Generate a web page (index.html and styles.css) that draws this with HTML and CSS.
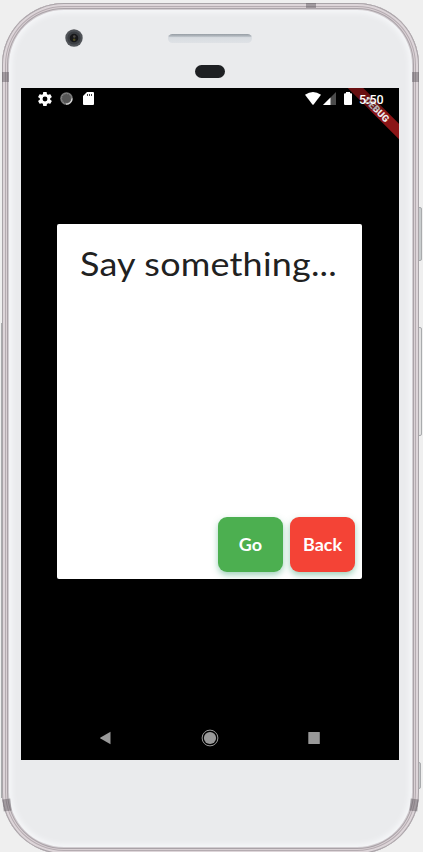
FILE: index.html
```html
<!DOCTYPE html>
<html lang="en">
<head>
<meta charset="utf-8">
<title>Say something</title>
<link rel="stylesheet" href="styles.css">
</head>
<body>
<div class="stage">
  <i class="side-key power"></i><i class="side-key volume"></i><i class="side-key lower"></i><i class="side-key left-key"></i>
  <div class="phone">
    <i class="seam top-seam"></i><i class="seam left-upper"></i><i class="seam right-upper"></i><i class="seam left-lower"></i><i class="seam right-lower"></i>
    <header class="forehead">
      <svg class="camera" width="18" height="18" viewBox="0 0 18 18"><circle cx="9" cy="9" r="8.7" fill="#505358"/><circle cx="9" cy="9" r="6.6" fill="#3b3e43"/><circle cx="9" cy="9" r="4.3" fill="#171719"/><circle cx="9.3" cy="7.5" r="1.3" fill="#4e4b47"/><circle cx="9.2" cy="10.8" r="1.3" fill="#504d22"/></svg>
      <div class="center-parts"><div class="speaker"></div><div class="sensor"></div></div>
    </header>
    <main class="screen">
      <div class="status">
        <svg class="gear" width="14" height="14" viewBox="2 2 20 20"><path fill="#fff" d="M19.4 13c.1-.3.1-.7.1-1s0-.7-.1-1l2.1-1.6c.2-.2.3-.4.1-.6l-2-3.5c-.1-.2-.4-.3-.6-.2l-2.5 1c-.5-.4-1.1-.7-1.7-1l-.4-2.6c0-.3-.2-.5-.5-.5h-4c-.3 0-.4.2-.5.4L9 5.100c-.6.2-1.100.6-1.600 1l-2.500-1c-.2-.1-.5 0-.6.2l-2 3.500c-.1.2-.1.5.1.6L4.600 11v2l-2.200 1.600c-.2.2-.2.4-.1.6l2 3.500c.1.2.4.3.6.2l2.500-1c.5.4 1 .7 1.600 1l.4 2.700c0 .2.2.4.5.4h4c.3 0 .5-.2.5-.4l.4-2.700c.6-.2 1.200-.6 1.700-1l2.500 1c.2.1.5 0 .6-.2l2-3.500c.1-.2.1-.5-.1-.6zM12 15.500A3.500 3.500 0 1 1 12 8.500a3.500 3.500 0 0 1 0 7z"/></svg>
        <svg class="sync" width="13" height="13" viewBox="0 0 13 13"><circle cx="6.500" cy="6.500" r="6.300" fill="#777"/><circle cx="6.500" cy="6.500" r="4.800" fill="#555" stroke="#999" stroke-width=".8" stroke-dasharray="1 1.500"/><path d="M12 6.500A5.500 5.500 0 0 1 6 12" fill="none" stroke="#ddd" stroke-width="1.200"/></svg>
        <svg class="card-icon" width="11" height="13" viewBox="0 0 11 13"><path fill="#fff" d="M4 0h6q1 0 1 1v11q0 1-1 1H1q-1 0-1-1V4z"/><path stroke="#444" stroke-width="1" d="M4.500 2v2M6.500 2v2M8.500 2v2"/></svg>
        <span class="spacer"></span>
        <svg class="wifi" width="16" height="13" viewBox="0 0 16 13"><path fill="#fff" d="M0 2.700Q8-2.700 16 2.700L8.600 12.400Q8 13.100 7.400 12.400z"/></svg>
        <svg class="signal" width="13" height="13" viewBox="0 0 13 13"><path fill="#4b4b4b" d="M13 0v13H0z"/><path fill="#fff" d="M7.500 5.500V13H0z"/></svg>
        <svg class="battery" width="8" height="13" viewBox="0 0 8 13"><path fill="#fff" d="M2 0h4v1.300h1q1 0 1 1V12q0 1-1 1H1q-1 0-1-1V2.300q0-1 1-1h1z"/></svg>
        <span class="time">5:50</span>
      </div>
      <div class="banner"><div class="ribbon">DEBUG</div><div class="shade"></div></div>
      <section class="dialog">
        <h1>Say something...</h1>
        <div class="actions"><button class="go"><span>Go</span></button><button class="back"><span>Back</span></button></div>
      </section>
      <nav class="nav">
        <svg width="12" height="14" viewBox="0 0 12 14"><path fill="#999" d="M11.500.800v12.400L1.500 7.600q-1-.6 0-1.200z"/></svg>
        <svg width="18" height="18" viewBox="0 0 18 18"><circle cx="9" cy="9" r="7.900" fill="none" stroke="#999"/><circle cx="9" cy="9" r="6.100" fill="#999"/></svg>
        <svg width="12" height="12" viewBox="0 0 12 12"><rect width="11.500" height="12" x=".3" rx=".5" fill="#999"/></svg>
      </nav>
    </main>
  </div>
</div>
</body>
</html>
```
FILE: styles.css
```css
* { box-sizing: border-box; }
body { margin: 0; background: #efefef; overflow: hidden; }
.stage { position: relative; width: 423px; height: 852px; padding: 3px 0 0 2px; overflow: hidden; }
.phone {
  position: relative; width: 417px; height: 851px; padding: 0 19px;
  border-radius: 62px; background: #eaebed;
  box-shadow: inset 0 0 0 1px #a9a4a8, inset 0 0 0 3px #ddd5d9, inset 0 0 0 4px #b5acb1, inset 0 0 0 5px #d9d0d4, inset 0 0 0 6px #aaa3a8, inset 0 0 0 7px #d2cdd1, inset 0 0 5px 10px #f5f6f8;
}
.forehead { height: 85px; display: flex; }
.camera { margin: 26px 0 0 44px; }
.center-parts { width: 84px; margin: 31px 0 0 85px; display: flex; flex-direction: column; align-items: center; gap: 22px; }
.speaker { width: 84px; height: 9px; border-radius: 5px; background: linear-gradient(#969da4, #b4bac1 25%, #d8dce1 40%, #dfe2e6); }
.sensor { width: 30px; height: 13px; border-radius: 7px; background: #1e2023; }
.screen { position: relative; width: 378px; height: 672px; background: #000; display: flex; flex-direction: column; align-items: center; }
.status { position: relative; z-index: 2; width: 378px; height: 22px; padding: 0 15px 0 17px; display: flex; align-items: center; }
.gear, .sync, .card-icon, .wifi, .signal, .battery { margin-top: -1px; }
.sync { margin-left: 8px; }
.card-icon { margin-left: 10px; }
.spacer { flex: 1; }
.signal { margin-left: 2px; }
.battery { margin-right: 7px; margin-left: 8px; }
.time { width: 25px; color: #fff; font: 500 12.500px/23px Roboto, sans-serif; white-space: nowrap; }
.banner { position: absolute; z-index: 1; top: 0; right: 0; width: 56px; height: 56px; overflow: hidden; }
.ribbon { position: absolute; left: -16px; top: 16px; width: 100px; height: 11px; background: #8b1517; color: #eee; font: 900 9.500px/11px Roboto, sans-serif; text-align: center; transform: rotate(45deg); }
.shade { position: absolute; inset: 0 0 auto; height: 22px; background: rgba(0,0,0,.25); }
.dialog { width: 305px; height: 355px; margin: 114px 0 0 -1px; padding: 18px 7px 7px; background: #fff; border-radius: 2px; overflow: hidden; display: flex; flex-direction: column; justify-content: space-between; }
h1 { margin: 0 0 0 16px; color: #212121; font: 400 32.500px/44px Lato, sans-serif; white-space: nowrap; letter-spacing: .2px; transform: scaleX(1.105); transform-origin: left; }
.actions { display: flex; justify-content: flex-end; gap: 7px; }
button { width: 65px; height: 55px; padding: 0; border: 0; border-radius: 9px; color: #fff; font: 700 16.500px/57px Lato, sans-serif; box-shadow: 0 3px 6px rgba(65,165,120,.5); }
button span { display: block; padding-top: 1px; line-height: 24px; transform: scaleX(1.09); }
.go { background: #4caf50; }
.back { background: #f44336; }
.nav { width: 100%; height: 45px; margin-top: 136px; padding: 0 79px 0 78px; display: flex; align-items: center; justify-content: space-between; }
.seam { position: absolute; background: rgba(90,85,92,.45); }
.top-seam { left: 304px; top: 0; width: 10px; height: 5px; }
.left-upper, .right-upper { top: 69px; width: 7px; height: 10px; }
.left-upper { left: 0; }
.right-upper { right: 0; }
.left-lower, .right-lower { top: 796px; width: 8px; height: 12px; }
.left-lower { left: 1px; transform: rotate(-7deg); }
.right-lower { right: 1px; transform: rotate(7deg); }
.side-key { position: absolute; width: 4px; left: 418px; border: 1px solid #a9abad; background: #c9cdce; border-radius: 0 2px 2px 0; }
.power { top: 207px; height: 54px; }
.volume { top: 327px; height: 109px; background: #e2e2e2; }
.lower { top: 762px; height: 27px; width: 3px; }
.left-key { left: 1px; top: 323px; height: 475px; width: 2px; border-radius: 0; background: #999; }
```
